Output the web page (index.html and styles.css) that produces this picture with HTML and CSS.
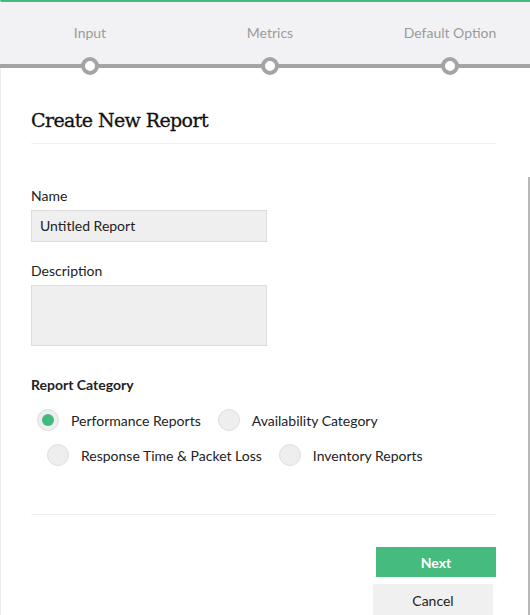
FILE: index.html
```html
<!DOCTYPE html>
<html>
<head>
<meta charset="utf-8">
<link rel="stylesheet" href="styles.css">
</head>
<body>
<div class="page">
  <div class="stepper">
    <div class="step"><span class="step-label">Input</span><span class="dot"></span></div>
    <div class="step"><span class="step-label">Metrics</span><span class="dot"></span></div>
    <div class="step"><span class="step-label">Default Option</span><span class="dot"></span></div>
  </div>
  <div class="content">
    <h1 class="title">Create New Report</h1>
    <div class="field">
      <label class="label">Name</label>
      <div class="input">Untitled Report</div>
    </div>
    <div class="field">
      <label class="label">Description</label>
      <div class="textarea"></div>
    </div>
    <div class="category">
      <div class="label bold">Report Category</div>
      <div class="radio-row">
        <span class="radio checked"></span><span class="radio-label">Performance Reports</span>
        <span class="radio"></span><span class="radio-label">Availability Category</span>
      </div>
      <div class="radio-row second">
        <span class="radio"></span><span class="radio-label">Response Time &amp; Packet Loss</span>
        <span class="radio"></span><span class="radio-label">Inventory Reports</span>
      </div>
    </div>
    <div class="actions">
      <button class="btn next">Next</button>
      <button class="btn cancel">Cancel</button>
    </div>
  </div>
  <div class="scrollbar"></div>
</div>
</body>
</html>
```
FILE: styles.css
```css
html, body {
  margin: 0;
  padding: 0;
  background: #fff;
}
body {
  font-family: Lato, "Open Sans", sans-serif;
  color: #222;
  width: 530px;
  height: 615px;
  overflow: hidden;
}
.page {
  position: relative;
  width: 530px;
  height: 615px;
  border-top: 2px solid #45b97c;
  box-sizing: border-box;
  border-left: 1px solid #ececec;
}
.stepper {
  display: flex;
  height: 62px;
  background: #f2f2f4;
  border-bottom: 4px solid #a4a4a4;
  box-sizing: content-box;
  margin-left: -1px;
  width: 540px;
}
.step {
  position: relative;
  width: 180px;
  display: flex;
  justify-content: center;
}
.step-label {
  margin-top: 22px;
  font-size: 14px;
  color: #9b9b9b;
  line-height: 18px;
}
.dot {
  position: absolute;
  left: 81px;
  bottom: -11px;
  width: 10px;
  height: 10px;
  border: 4px solid #a4a4a4;
  border-radius: 50%;
  background: #fff;
}
.content {
  padding: 0 34px 0 30px;
}
.title {
  font-family: "DejaVu Serif", serif;
  font-weight: normal;
  font-size: 19px;
  letter-spacing: -0.6px;
  -webkit-text-stroke: 0.3px #111;
  color: #111;
  margin: 39px 0 0;
  padding-bottom: 10px;
  line-height: 26px;
  border-bottom: 1px solid #f0f0f0;
}
.field {
  display: flex;
  flex-direction: column;
  align-items: flex-start;
}
.field:first-of-type {
  margin-top: 43px;
}
.label {
  font-size: 14px;
  line-height: 18px;
  color: #222;
  margin-bottom: 5px;
}
.bold {
  font-weight: bold;
}
.input {
  width: 236px;
  height: 32px;
  box-sizing: border-box;
  background: #efefef;
  border: 1px solid #dcdcdc;
  font-size: 14px;
  line-height: 30px;
  padding-left: 8px;
  color: #222;
}
.textarea {
  width: 236px;
  height: 61px;
  box-sizing: border-box;
  background: #efefef;
  border: 1px solid #dcdcdc;
}
.field + .field {
  margin-top: 20px;
}
.category {
  margin-top: 30px;
  padding-bottom: 48px;
  border-bottom: 1px solid #efefef;
}
.category .label {
  margin-bottom: 15px;
}
.radio-row {
  display: flex;
  align-items: center;
  padding-left: 6px;
  height: 22px;
}
.radio-row.second {
  margin-top: 13px;
  padding-left: 16px;
}
.radio {
  width: 22px;
  height: 22px;
  box-sizing: border-box;
  border-radius: 50%;
  background: #eeeeee;
  border: 1px solid #dedede;
  display: flex;
  align-items: center;
  justify-content: center;
}
.radio.checked::after {
  content: "";
  width: 12px;
  height: 12px;
  border-radius: 50%;
  background: #45b97c;
}
.radio-label {
  font-size: 14px;
  color: #222;
  margin-left: 12px;
  margin-right: 17px;
}
.actions {
  display: flex;
  flex-direction: column;
  align-items: flex-end;
  margin-top: 32px;
}
.btn {
  width: 120px;
  height: 30px;
  border: none;
  font-family: Lato, "Open Sans", sans-serif;
  font-size: 14px;
  cursor: pointer;
}
.next {
  background: #45bb7d;
  color: #fff;
  font-weight: bold;
}
.cancel {
  margin-top: 7px;
  margin-right: 3px;
  background: #f0f0f0;
  color: #222;
  height: 32px;
}
.scrollbar {
  position: absolute;
  right: 0;
  top: 175px;
  bottom: 0;
  width: 2px;
  background: #b8b8b8;
}
```
